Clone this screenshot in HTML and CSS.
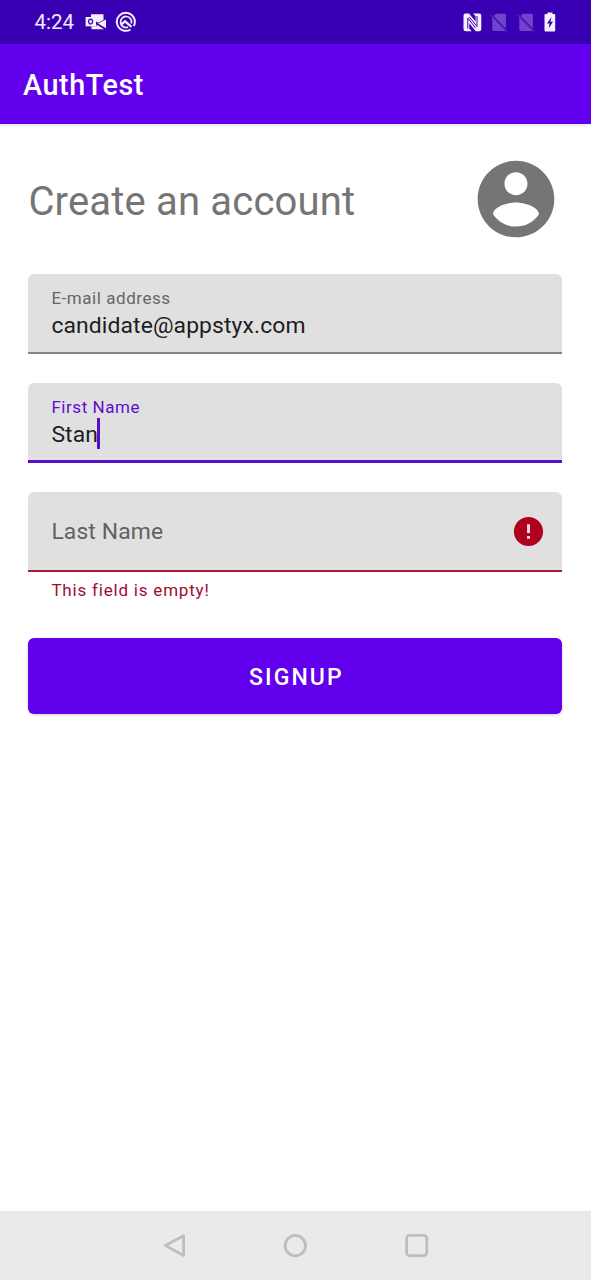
FILE: index.html
```html
<!DOCTYPE html>
<html lang="en">
<head>
<meta charset="utf-8">
<title>AuthTest</title>
<link rel="stylesheet" href="styles.css">
</head>
<body>
<div class="screen">
  <div class="status">
    <span class="clock">4:24</span>
    <svg class="mail" width="22" height="18" viewBox="0 0 22 18">
      <path class="light" d="M6 1.300h12.500v5.700L13 9.800 11 8.500V4H6z"/>
      <path class="light" d="M.600 4h10.400v9.300H.600z"/>
      <path class="light" d="M11.500 11.500 19 16.200H6.500V13.300h5z"/>
      <path class="light" d="M13 10.600 21 6.600v8.600z"/>
      <ellipse class="bar-line" cx="5.600" cy="8.600" rx="2" ry="2.400" stroke-width="1.200"/>
    </svg>
    <svg class="search" width="22" height="22" viewBox="0 0 22 22">
      <path class="light-line" d="M15.500 18.500A9 9 0 1 1 18.800 15" stroke-width="2"/>
      <path class="light-line" d="M13 16.100A5.500 5.500 0 1 1 16.300 12.500" stroke-width="1.700"/>
      <path class="light-line" d="M6.500 13.300 10 10.300l6.500 5.500" stroke-width="2.200"/>
    </svg>
    <span class="spacer"></span>
    <svg class="nfc" width="19" height="19" viewBox="0 0 19 19">
      <path class="light" d="M2.300.500h3.700l6.600 8V3.300L10 .500h6.200a2.100 2.100 0 0 1 2.100 2.100v13.600a2.100 2.100 0 0 1-2.100 2.100h-3.400L6.300 10.200v5.300l2.500 2.800h-6a2.300 2.300 0 0 1-2.300-2.300V2.500A2 2 0 0 1 2.300.500z"/>
      <path class="bar-line" d="M4.800 15.500V5l7.800 10M14 3v10.500L6.300 4" stroke-width="1"/>
    </svg>
    <svg class="sim" width="18" height="19" viewBox="0 0 18 19">
      <path class="faded" d="M6 .800h8.700a1.200 1.200 0 0 1 1.200 1.200v13.600L3.600 3zM2.300 4 15.500 18H3.800a1.500 1.500 0 0 1-1.500-1.500z"/>
      <path class="faded-line" d="m.600 1.900 16.200 16.600" stroke-width="1.200"/>
    </svg>
    <svg class="sim" width="18" height="19" viewBox="0 0 18 19">
      <path class="faded" d="M6 .800h8.700a1.200 1.200 0 0 1 1.200 1.200v13.600L3.600 3zM2.300 4 15.500 18H3.800a1.500 1.500 0 0 1-1.500-1.500z"/>
      <path class="faded-line" d="m.600 1.900 16.200 16.600" stroke-width="1.200"/>
    </svg>
    <svg class="battery" width="12" height="20" viewBox="0 0 12 20">
      <path class="light" d="M3.500.500h5V2H10.200a1 1 0 0 1 1 1v15.500a1 1 0 0 1-1 1H1.500a1 1 0 0 1-1-1V3a1 1 0 0 1 1-1h2z"/>
      <path class="bar-fill" d="M7.500 5 3 11.500h2.500L4.800 16.300 9 9.700H6.500z"/>
    </svg>
  </div>
  <header class="toolbar">AuthTest</header>
  <main class="content">
    <div class="heading">
      <h1 class="title">Create an account</h1>
      <svg class="avatar" width="92" height="92" viewBox="0 0 24 24">
        <path d="M12 2C6.480 2 2 6.480 2 12s4.480 10 10 10 10-4.480 10-10S17.520 2 12 2zm0 3c1.660 0 3 1.340 3 3s-1.340 3-3 3-3-1.340-3-3 1.340-3 3-3zm0 14.200c-2.500 0-4.710-1.280-6-3.220.030-1.990 4-3.080 6-3.080 1.990 0 5.970 1.090 6 3.080-1.290 1.940-3.500 3.220-6 3.220z"/>
      </svg>
    </div>
    <div class="field">
      <span class="label">E-mail address</span>
      <span class="value">candidate@appstyx.com</span>
    </div>
    <div class="field focused">
      <span class="label">First Name</span>
      <span class="value">Stan<span class="caret"></span></span>
    </div>
    <div class="field error">
      <span class="hint">Last Name</span>
      <svg class="alert" width="35" height="35" viewBox="0 0 24 24">
        <path d="M12 2C6.480 2 2 6.480 2 12s4.480 10 10 10 10-4.480 10-10S17.520 2 12 2zm1 15h-2v-2h2v2zm0-4h-2V7h2v6z"/>
      </svg>
    </div>
    <div class="message">This field is empty!</div>
    <div class="button">SIGNUP</div>
  </main>
  <nav class="navbar">
    <svg class="back" width="24" height="26" viewBox="0 0 24 26"><path d="M2.300 12.600 20.600 2.800v19.800z"/></svg>
    <svg class="home" width="26" height="26" viewBox="0 0 26 26"><circle cx="13.300" cy="12.600" r="10.200"/></svg>
    <svg class="recent" width="26" height="26" viewBox="0 0 26 26"><rect x="2.600" y="2.400" width="20.200" height="20.200" rx="3"/></svg>
  </nav>
</div>
</body>
</html>
```
FILE: styles.css
```css
* { box-sizing: border-box; }
body { margin: 0; font-family: Roboto, sans-serif; background: #fff; }
svg { display: block; flex: none; }
.screen { width: 591px; height: 1280px; display: flex; flex-direction: column; overflow: hidden; }

.status { height: 44px; flex: none; background: #3900b3; color: #f3eafc; display: flex; align-items: center; padding: 0 35px 0 34.500px; }
.clock { font-size: 20.500px; line-height: 46px; width: 50.500px; white-space: nowrap; }
.search { margin-left: 8px; }
.spacer { flex: 1; }
.nfc { margin-right: 8px; }
.sim { margin-right: 9px; }
.light { fill: #f7effc; }
.light-line { fill: none; stroke: #f7effc; }
.bar-fill { fill: #3900b3; }
.bar-line { fill: none; stroke: #3900b3; }
.faded { fill: #7045cb; }
.faded-line { fill: none; stroke: #5a2cc0; }

.toolbar { height: 80px; flex: none; background: #6200ee; color: #fff; font-size: 28.800px; font-weight: 500; letter-spacing: .550px; line-height: 83px; padding-left: 23px; box-shadow: 0 1px 4px rgba(0, 0, 0, .14); }

.content { flex: 1; padding: 29px 28.600px 0 28.400px; }
.heading { display: flex; justify-content: space-between; height: 121px; }
.title { margin: 0; font-size: 40px; font-weight: 400; letter-spacing: .180px; line-height: 97.500px; color: #757575; white-space: nowrap; }
.avatar { fill: #757575; }

.field { position: relative; height: 80px; margin-bottom: 29px; padding: 13px 19px 0 23px; background: #e0e0e0; border-radius: 6px 6px 0 0; border-bottom: 2px solid #858585; display: flex; flex-direction: column; }
.label { font-size: 17px; line-height: 22px; letter-spacing: .550px; color: #666; }
.value { font-size: 22.900px; line-height: 34px; letter-spacing: .110px; color: #1d1d1d; display: flex; align-items: center; }
.focused { border-bottom: 3px solid #5b0cc4; }
.focused .label { color: #5f0cd0; }
.caret { width: 3px; height: 31px; background: #5b0cc4; margin: -4px 0 0 -1px; }
.error { flex-direction: row; align-items: center; justify-content: space-between; padding: 1px 16.800px 0 23px; margin-bottom: 0; border-bottom-color: #a41e34; }
.hint { font-size: 22.900px; letter-spacing: .120px; color: #616161; }
.alert { fill: #b00020; background: radial-gradient(circle, #f0dfe1 0 8px, transparent 9px); }
.message { margin: 7px 0 0 23px; height: 59px; font-size: 17px; line-height: 23px; letter-spacing: .800px; color: #a00c30; }
.button { height: 76px; border-radius: 6px; background: #6200ee; color: #fff; font-size: 23px; font-weight: 500; letter-spacing: 2.100px; line-height: 79px; padding-left: 2px; text-align: center; box-shadow: 0 1px 3px rgba(0, 0, 0, .2); }

.navbar { height: 69px; flex: none; background: #eaeaea; border-top: 1px solid #e7e7e7; display: flex; align-items: center; padding-left: 163px; }
.navbar svg { fill: none; stroke: #bebebe; stroke-width: 2.800px; stroke-linejoin: round; }
.home { margin-left: 95px; }
.recent { margin-left: 96px; }
```
